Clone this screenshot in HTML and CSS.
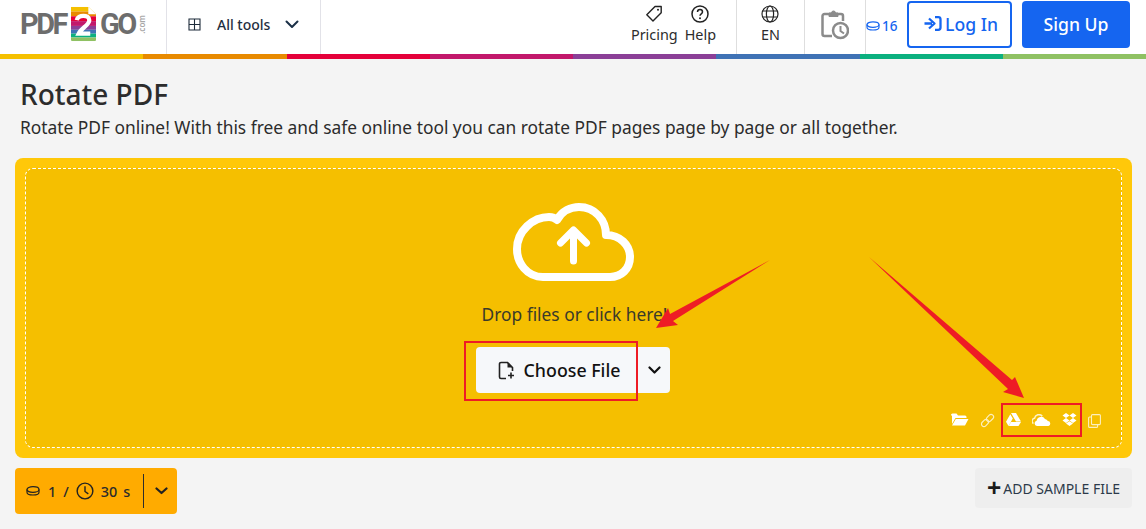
FILE: index.html
```html
<!DOCTYPE html>
<html lang="en">
<head>
<meta charset="utf-8">
<title>Rotate PDF</title>
<link rel="stylesheet" href="styles.css">
</head>
<body>
<header class="topbar">
  <a class="logo">
    <span class="logo-word">PDF</span>
    <svg class="logo-mark" width="28" height="36" viewBox="0 0 28 36">
      <defs><clipPath id="sheet"><path d="M1 0H19L27 8V34a2 2 0 0 1-2 2H3a2 2 0 0 1-2-2Z"/></clipPath></defs>
      <g clip-path="url(#sheet)">
        <rect y="0" width="28" height="5" fill="#f5c000"/><rect y="5" width="28" height="5" fill="#e88a00"/>
        <rect y="10" width="28" height="5" fill="#e4003a"/><rect y="15" width="28" height="5" fill="#c2186b"/>
        <rect y="20" width="28" height="4" fill="#8b3f97"/><rect y="24" width="28" height="4" fill="#3f72b5"/>
        <rect y="28" width="28" height="4" fill="#0bb07f"/><rect y="32" width="28" height="4" fill="#8fc163"/>
      </g>
      <path d="M19 0V8H27" fill="#fff"/>
      <path d="M7 14c1-6 13-6 13 0 0 5-8 8-11 14H21" fill="none" stroke="#fff" stroke-width="4.4"/>
    </svg>
    <span class="logo-word">GO</span>
    <span class="logo-com">.com</span>
  </a>
  <div class="tools-menu">
    <svg class="tools-icon" width="13" height="13" viewBox="0 0 13 13"><path d="M1 1h11v11H1ZM6.500 1v11M1 6.500h11" fill="none" stroke="#1d2b3a" stroke-width="1.100"/></svg>
    <span class="tools-label">All tools</span>
    <svg class="chev-head" width="14" height="9" viewBox="0 0 14 9"><path d="M1.500 1.500 7 7l5.500-5.500" fill="none" stroke="#1b3047" stroke-width="2" stroke-linecap="round" stroke-linejoin="round"/></svg>
  </div>
  <div class="spacer"></div>
  <nav class="nav-group nav-links">
    <a class="nav-item">
      <svg width="18" height="18" viewBox="0 0 18 18"><path d="M10 1.500h6.200v6.200L8 16 1.800 9.800Z" fill="none" stroke="#222" stroke-width="1.400" stroke-linejoin="round"/><circle cx="13" cy="4.800" r="1" fill="#222"/></svg>
      <span>Pricing</span>
    </a>
    <a class="nav-item">
      <svg width="18" height="18" viewBox="0 0 18 18"><circle cx="9" cy="9" r="8" fill="none" stroke="#222" stroke-width="1.500"/><path d="M6.500 7c0-3.300 5-3.300 5 0 0 1.900-2.500 1.800-2.500 3.700" fill="none" stroke="#222" stroke-width="1.500"/><circle cx="9" cy="13.200" r="1" fill="#222"/></svg>
      <span>Help</span>
    </a>
  </nav>
  <nav class="nav-group nav-lang">
    <a class="nav-item">
      <svg width="18" height="18" viewBox="0 0 18 18"><g fill="none" stroke="#222" stroke-width="1.200"><circle cx="9" cy="9" r="8"/><ellipse cx="9" cy="9" rx="3.600" ry="8"/><path d="M1.800 6h14.400M1.800 12h14.400"/></g></svg>
      <span>EN</span>
    </a>
  </nav>
  <div class="nav-group nav-history">
    <svg width="28" height="30" viewBox="0 0 28 30"><g fill="none" stroke="#8b8b8b" stroke-width="2.500"><path d="M11 26H3.500a2 2 0 0 1-2-2V6a2 2 0 0 1 2-2H20a2 2 0 0 1 2 2v5"/><path d="M8 6V3h2.500a2 2 0 0 1 4 0H17v3.500H8Z" fill="#8b8b8b" stroke-width="1"/><circle cx="19.500" cy="20.500" r="7.500"/><path d="M19.500 16v5l3.500 2.500" stroke-width="2"/></g></svg>
  </div>
  <div class="credits">
    <svg width="14" height="10" viewBox="0 0 14 10"><g fill="none" stroke="#1565f0" stroke-width="1.200"><ellipse cx="7" cy="3.600" rx="6" ry="2.800"/><path d="M1 3.600v2.600c0 1.600 2.700 2.800 6 2.800s6-1.200 6-2.800V3.600"/></g></svg>
    <span>16</span>
  </div>
  <a class="btn-login">
    <svg width="19" height="15" viewBox="0 0 19 15"><path d="M1.500 7.500H9M6 2.500l5.500 5-5.500 5M12 1.200h3.300a2.200 2.200 0 0 1 2.200 2.200v8.200a2.200 2.200 0 0 1-2.200 2.200H12" fill="none" stroke="#1565f0" stroke-width="2.300" stroke-linejoin="round"/></svg>
    <span>Log In</span>
  </a>
  <a class="btn-signup">Sign Up</a>
</header>
<div class="stripe">
  <i class="s1"></i><i class="s2"></i><i class="s3"></i><i class="s4"></i><i class="s5"></i><i class="s6"></i><i class="s7"></i><i class="s8"></i>
</div>
<main class="content">
  <h1 class="title">Rotate PDF</h1>
  <p class="lead">Rotate PDF online! With this free and safe online tool you can rotate PDF pages page by page or all together.</p>
  <section class="drop-outer">
    <div class="drop-inner">
      <svg class="cloud" width="122" height="78" viewBox="0 0 122 78">
        <path d="M30 74C14 74 4 60 4 46 4 28 20 14 36 14c3 0 6 1 8 3C49 8 58 4 66 4c16 0 27 13 27 28 14 0 24 10 24 22 0 12-9 20-20 20Z" fill="none" stroke="#fff" stroke-width="8" stroke-linejoin="round"/>
        <path d="M60.500 58V28M47.500 40 60.500 27l13 13" fill="none" stroke="#fff" stroke-width="7" stroke-linecap="round" stroke-linejoin="round"/>
      </svg>
      <p class="drop-text">Drop files or click here!</p>
      <div class="choose-row">
        <a class="btn-choose">
          <svg width="17" height="19" viewBox="0 0 17 19"><path d="M8 17.500H3a1.500 1.500 0 0 1-1.500-1.500V3A1.500 1.500 0 0 1 3 1.500h6.500L14.500 6.500V10" fill="none" stroke="#222" stroke-width="1.600"/><path d="M9.500 1.500v5h5Z" fill="#222"/><path d="M13 11.500v6M10 14.500h6" stroke="#222" stroke-width="1.600"/></svg>
          <span>Choose File</span>
        </a>
        <a class="btn-more">
          <svg width="13" height="9" viewBox="0 0 13 9"><path d="M1.500 1.500 6.500 6.500l5-5" fill="none" stroke="#111" stroke-width="2.200" stroke-linecap="round" stroke-linejoin="round"/></svg>
        </a>
      </div>
      <div class="sources">
        <svg width="18" height="13" viewBox="0 0 18 13"><path d="M0 2a1.500 1.500 0 0 1 1.500-1.500h4L7 2.500h7A1.500 1.500 0 0 1 15.500 4v1H4.500L1 11V3ZM4.800 6H17.500L14 12.500H1Z" fill="#fff"/></svg>
        <svg class="faint" width="15" height="15" viewBox="0 0 15 15"><g fill="none" stroke="#fff" stroke-width="1.200" transform="rotate(-45 7.500 7.500)"><rect x="0" y="5" width="8" height="5" rx="2.500"/><rect x="7" y="5" width="8" height="5" rx="2.500"/></g></svg>
        <svg width="15" height="13" viewBox="0 0 15 13"><path d="M5 0h5l5 8.500h-5ZM4.300 1.200 6.800 5.500 2.500 13 0 8.700ZM5 9h10l-2.500 4H2.800Z" fill="#fff"/></svg>
        <svg width="19" height="12" viewBox="0 0 19 12"><path d="M1.500 9.500A2.800 2.800 0 0 1 2.500 4.300 4.500 4.500 0 0 1 10.300 2.200" fill="none" stroke="#fff" stroke-width="1.500" opacity=".8"/><path d="M5 12a2.700 2.700 0 0 1-.4-5.300A4.600 4.600 0 0 1 13 4.900 3.600 3.600 0 0 1 15.800 7.100 2.500 2.500 0 0 1 16.500 12Z" fill="#fff"/></svg>
        <svg width="15" height="13" viewBox="0 0 15 13"><path d="M4 0 7.500 2.500 4 5 .5 2.500ZM11 0l3.500 2.500L11 5 7.500 2.500ZM4 5l3.500 2.500L4 10 .5 7.500ZM11 5l3.500 2.500L11 10 7.500 7.500ZM4 10.500l3.500-2.200 3.500 2.200-3.500 2.500Z" fill="#fff"/></svg>
        <svg class="faint" width="13" height="14" viewBox="0 0 13 14"><g fill="none" stroke="#fff" stroke-width="1.100"><rect x="3.500" y=".6" width="8.900" height="10" rx="1"/><path d="M3.500 3H1.600a1 1 0 0 0-1 1v8.400a1 1 0 0 0 1 1h7a1 1 0 0 0 1-1v-1.800"/></g></svg>
      </div>
    </div>
  </section>
  <div class="bottom-row">
    <div class="cost">
      <svg width="14" height="10" viewBox="0 0 14 10"><g fill="none" stroke="#222" stroke-width="1.200"><ellipse cx="7" cy="3.500" rx="6" ry="2.800"/><path d="M1 3.500v2.700c0 1.600 2.700 2.800 6 2.800s6-1.200 6-2.800V3.500"/></g></svg>
      <span class="cost-num">1</span>
      <span class="cost-slash">/</span>
      <svg width="18" height="18" viewBox="0 0 19 19"><g fill="none" stroke="#222" stroke-width="1.500"><circle cx="9.500" cy="9.500" r="8.300"/><path d="M9.500 4.500v5.500l3.500 2.500"/></g></svg>
      <span class="cost-time">30</span>
      <span class="cost-unit">s</span>
      <span class="cost-sep"></span>
      <svg width="13" height="8" viewBox="0 0 13 8"><path d="M1.500 1.500 6.500 6l5-4.500" fill="none" stroke="#222" stroke-width="2.200" stroke-linecap="round" stroke-linejoin="round"/></svg>
    </div>
    <a class="btn-sample"><span class="plus">+</span><span>ADD SAMPLE FILE</span></a>
  </div>
</main>
<svg class="annotations" width="1146" height="529" viewBox="0 0 1146 529">
  <rect x="465" y="342" width="172" height="58" fill="none" stroke="#ee1c25" stroke-width="2"/>
  <rect x="1002" y="404" width="79" height="32" fill="none" stroke="#ee1c25" stroke-width="2"/>
  <path d="M770 260 670 314 668 308 656 328 678 325 673 321Z" fill="#ee1c25"/>
  <path d="M869 257 1012 380 1015 377 1024 398 1003 392 1008 389Z" fill="#ee1c25"/>
</svg>
</body>
</html>
```
FILE: styles.css
```css
* { box-sizing: border-box; }
html, body { margin: 0; padding: 0; }
body {
  width: 1146px;
  height: 529px;
  overflow: hidden;
  position: relative;
  background: #f4f4f4;
  color: #2c2c2c;
  font-family: "Noto Sans", "Open Sans", sans-serif;
}
a { color: inherit; text-decoration: none; }
svg { display: block; flex: none; }

.topbar {
  height: 54px;
  background: #fff;
  display: flex;
  align-items: stretch;
}
.logo {
  width: 166px;
  padding-left: 20px;
  padding-bottom: 6px;
  display: flex;
  align-items: center;
  gap: 1px;
}
.logo-word {
  font-family: "Liberation Sans Narrow", "Roboto", sans-serif;
  font-weight: 700;
  font-size: 29px;
  letter-spacing: -2.500px;
  color: #6d6d6d;
  line-height: 1;
}
.logo-mark { margin: 0 2px 0 3px; width: 27px; height: 36px; }
.logo-com {
  font-size: 8px;
  color: #a8a8a8;
  writing-mode: vertical-rl;
  transform: rotate(180deg);
  line-height: 1;
  font-weight: 600;
  margin-left: 2px;
}
.tools-menu {
  width: 155px;
  border-left: 1px solid #e2e2e8;
  border-right: 1px solid #e2e2e8;
  display: flex;
  align-items: center;
  padding-left: 21px;
  padding-bottom: 5px;
}
.tools-label { font-size: 14px; margin-left: 16px; color: #1f2f42; font-weight: 500; }
.chev-head { margin-left: 15px; }
.spacer { flex: 1; }
.nav-group {
  display: flex;
  align-items: center;
  justify-content: center;
  border-right: 1px solid #dedede;
  padding-bottom: 4px;
}
.nav-links { width: 113px; justify-content: flex-end; padding-right: 20px; gap: 7px; }
.nav-lang { width: 68px; }
.nav-history { width: 61px; }
.nav-item {
  display: flex;
  flex-direction: column;
  align-items: center;
  font-size: 14.400px;
  line-height: 20px;
  color: #2c2c2c;
  gap: 2px;
}
.credits {
  width: 41px;
  padding-bottom: 3px;
  display: flex;
  align-items: center;
  gap: 2px;
  color: #1565f0;
  font-size: 13.500px;
  font-weight: 500;
}
.btn-login, .btn-signup {
  height: 47px;
  margin-top: 1px;
  padding-bottom: 2px;
  border-radius: 4px;
  display: flex;
  align-items: center;
  justify-content: center;
  font-size: 17.600px;
  font-weight: 500;
}
.btn-login {
  width: 105px;
  border: 2px solid #1565f0;
  color: #1565f0;
  gap: 3px;
  padding-left: 2px;
}
.btn-signup {
  width: 108px;
  margin-left: 10px;
  margin-right: 16px;
  background: #1565f0;
  color: #fff;
}

.stripe { height: 5px; display: flex; }
.stripe i { flex: 1; }
.s1 { background: #f5c000; }
.s2 { background: #e88a00; }
.s3 { background: #e4003a; }
.s4 { background: #c2186b; }
.s5 { background: #8b3f97; }
.s6 { background: #3f72b5; }
.s7 { background: #0bb07f; }
.s8 { background: #8fc163; }

.content { padding: 0 14px 0 15px; }
.title {
  margin: 18px 0 0 5px;
  font-size: 28px;
  line-height: 35px;
  font-weight: 500;
  color: #2c2c2c;
}
.lead {
  margin: 3px 0 0 5px;
  font-size: 17.350px;
  line-height: 24px;
  color: #2c2c2c;
}
.drop-outer {
  margin-top: 19px;
  height: 300px;
  background: #ffc809;
  border-radius: 8px;
  padding: 10px;
}
.drop-inner {
  height: 100%;
  background: #f5bf00;
  border: 1px dashed #fff;
  border-radius: 8px;
  display: flex;
  flex-direction: column;
  align-items: center;
  position: relative;
}
.cloud { margin-top: 34px; }
.drop-text {
  margin: 20px 0 0 2px;
  font-size: 17.350px;
  line-height: 26px;
  color: #3a3a2a;
}
.choose-row {
  display: flex;
  gap: 1px;
  margin-top: 20px;
  margin-left: -1px;
}
.btn-choose {
  width: 160px;
  height: 46px;
  padding-left: 6px;
  background: #f6f8fa;
  border-radius: 4px 0 0 4px;
  display: flex;
  align-items: center;
  justify-content: center;
  gap: 9px;
  font-size: 17.800px;
  font-weight: 500;
  color: #111;
}
.btn-more {
  width: 33px;
  height: 46px;
  padding-left: 2px;
  background: #f6f8fa;
  border-radius: 0 4px 4px 0;
  display: flex;
  align-items: center;
  justify-content: center;
}
.sources {
  position: absolute;
  right: 20px;
  top: 242px;
  display: flex;
  align-items: center;
  gap: 11px;
}
.faint { opacity: .75; margin-top: 2px; }

.bottom-row {
  margin-top: 10px;
  display: flex;
  justify-content: space-between;
  align-items: flex-start;
}
.cost {
  width: 162px;
  height: 46px;
  background: #ffab00;
  border-radius: 4px;
  display: flex;
  align-items: center;
  padding-left: 11px;
  font-size: 14.400px;
  font-weight: 500;
  color: #2c2c2c;
}
.cost-num { margin-left: 8px; }
.cost-slash { margin: 0 7px 0 7px; }
.cost-time { margin-left: 7px; }
.cost-unit { margin-left: 6px; }
.cost-sep { width: 1px; height: 34px; background: #2c2c2c; margin: 0 11px 0 13px; }
.btn-sample {
  width: 157px;
  height: 40px;
  background: #eeeeee;
  border-radius: 4px;
  display: flex;
  align-items: center;
  justify-content: center;
  font-size: 14px;
  color: #2c3a4a;
  gap: 2px;
}
.plus { font-size: 25px; line-height: 1; font-weight: 700; color: #1a1a1a; margin-top: -2px; }

.annotations { position: absolute; left: 0; top: 0; pointer-events: none; }
```
